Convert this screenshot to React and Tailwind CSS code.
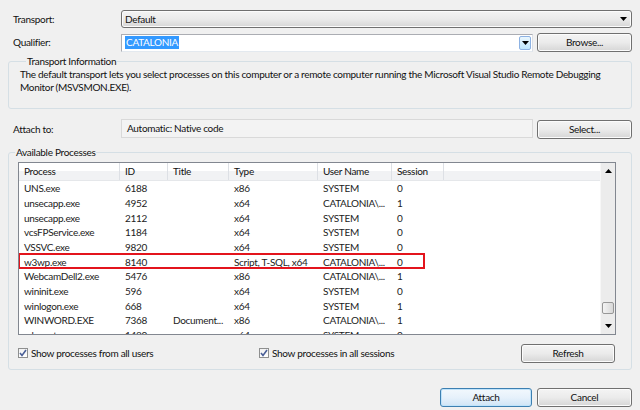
const processes = [
  { name: "UNS.exe", id: "6188", title: "", type: "x86", user: "SYSTEM", session: "0" },
  { name: "unsecapp.exe", id: "4952", title: "", type: "x64", user: "CATALONIA\\...", session: "1" },
  { name: "unsecapp.exe", id: "2112", title: "", type: "x64", user: "SYSTEM", session: "0" },
  { name: "vcsFPService.exe", id: "1184", title: "", type: "x64", user: "SYSTEM", session: "0" },
  { name: "VSSVC.exe", id: "9820", title: "", type: "x64", user: "SYSTEM", session: "0" },
  { name: "w3wp.exe", id: "8140", title: "", type: "Script, T-SQL, x64", user: "CATALONIA\\...", session: "0", marked: true },
  { name: "WebcamDell2.exe", id: "5476", title: "", type: "x86", user: "CATALONIA\\...", session: "1" },
  { name: "wininit.exe", id: "596", title: "", type: "x64", user: "SYSTEM", session: "0" },
  { name: "winlogon.exe", id: "668", title: "", type: "x64", user: "SYSTEM", session: "1" },
  { name: "WINWORD.EXE", id: "7368", title: "Document...", type: "x86", user: "CATALONIA\\...", session: "1" },
  { name: "wlanext.exe", id: "1480", title: "", type: "x64", user: "SYSTEM", session: "0" },
];

// win7 style button face
const face =
  "flex items-center rounded-[3px] border border-[#707070] bg-linear-to-b from-[#f4f4f4] via-[#ebebeb] to-[#d6d6d6] shadow-[inset_0_0_0_1px_#fcfcfc]";
const btn = `${face} h-[19px] justify-center`;

function Arrow({ up }) {
  return (
    <svg width="7" height="4" viewBox="0 0 7 4">
      <path d={up ? "M0 4 L3.5 0 L7 4 Z" : "M0 0 L7 0 L3.5 4 Z"} fill="#000" />
    </svg>
  );
}

function Check({ label }) {
  return (
    <div className="flex items-center gap-[3px]">
      <span className="w-[10px] h-[10px] border border-[#8e8f8f] bg-linear-to-b from-[#f2f2f2] to-[#ffffff] flex items-center justify-center">
        <svg width="8" height="8" viewBox="0 0 8 8">
          <path d="M1 4 L3 6.5 L7 1" stroke="#4a5f97" strokeWidth="1.6" fill="none" />
        </svg>
      </span>
      <span>{label}</span>
    </div>
  );
}

const cols = [
  { key: "name", label: "Process", w: "w-[101px]" },
  { key: "id", label: "ID", w: "w-[48px]" },
  { key: "title", label: "Title", w: "w-[61px]" },
  { key: "type", label: "Type", w: "w-[89px]" },
  { key: "user", label: "User Name", w: "w-[74px]" },
  { key: "session", label: "Session", w: "w-[52px]" },
];

export default function App() {
  return (
    <div className="w-[640px] h-[410px] overflow-hidden bg-[#f0f0f0] px-[8px] flex flex-col text-[10px] tracking-[-0.3px] text-[#111] [font-family:Lato,sans-serif]">
      {/* transport */}
      <div className="mt-[10px] h-[18px] flex items-center">
        <span className="w-[113px] pl-[5px]">Transport:</span>
        <div className={`${face} flex-1 h-[18px] justify-between pl-[3px] pr-[4px]`}>
          <span>Default</span>
          <Arrow />
        </div>
      </div>

      {/* qualifier */}
      <div className="mt-[5px] h-[19px] flex items-center">
        <span className="w-[113px] pl-[5px]">Qualifier:</span>
        <div className="w-[412px] h-[18px] bg-white border border-[#abadb3] border-b-[#e3e9ef] border-r-[#dbdfe6] flex items-center justify-between pl-[3px] pr-px">
          <span className="bg-[#3399ff] text-white leading-[13px] px-px">CATALONIA</span>
          <span className="w-[12px] h-[14px] rounded-[2px] border border-[#8db2e3] bg-linear-to-b from-[#eaf6fd] to-[#bee6fd] flex items-center justify-center">
            <Arrow />
          </span>
        </div>
        <div className={`${btn} w-[95px] ml-[4px]`}>Browse...</div>
      </div>

      {/* transport information */}
      <fieldset className="mt-[3px] border border-[#d5dfe5] rounded-[3px] pl-[11px] pb-[14px]">
        <legend className="ml-[6px] px-[1px] leading-[12px]">Transport Information</legend>
        <p className="leading-[13px] mt-px">
          The default transport lets you select processes on this computer or a remote computer running the Microsoft Visual Studio Remote Debugging
          <br />
          Monitor (MSVSMON.EXE).
        </p>
      </fieldset>

      {/* attach to */}
      <div className="mt-[10px] h-[20px] flex items-center">
        <span className="w-[113px] pl-[5px]">Attach to:</span>
        <div className="w-[412px] h-[19px] self-start bg-[#f3f3f3] border border-[#d9d9d9] flex items-center pl-[5px]">
          Automatic: Native code
        </div>
        <div className={`${btn} w-[95px] ml-[4px] self-end`}>Select...</div>
      </div>

      {/* available processes */}
      <fieldset className="mt-[7px] border border-[#d5dfe5] rounded-[3px] pb-[7px]">
        <legend className="ml-[6px] px-[1px] leading-[12px]">Available Processes</legend>

        <div className="mt-[4px] ml-[9px] mr-[15px] h-[173px] border border-[#828790] bg-white flex">
          <div className="flex-1 overflow-hidden">
            <div className="h-[18px] flex bg-[linear-gradient(#ffffff_0%,#ffffff_45%,#f1f2f4_45%,#f1f2f4_100%)] border-b border-[#e5e7ea]">
              {cols.map((c) => (
                <div key={c.key} className={`${c.w} shrink-0 pl-[5px] border-r border-[#dde0e5] flex items-center`}>
                  {c.label}
                </div>
              ))}
              <div className="flex-1" />
            </div>
            {processes.map((p, i) => (
              <div key={i} className="relative h-[14.67px] flex items-center leading-[14px] text-[#222]">
                {cols.map((c) => (
                  <div key={c.key} className={`${c.w} shrink-0 pl-[5px] whitespace-nowrap`}>
                    {p[c.key]}
                  </div>
                ))}
                {p.marked && (
                  <span className="absolute -left-px -top-px w-[407px] h-[16px] border-2 border-[#e3141c]" />
                )}
              </div>
            ))}
          </div>

          {/* scrollbar */}
          <div className="w-[15px] bg-[#ececec] border-l border-[#f7f7f7] flex flex-col">
            <div className="h-[16px] flex items-center justify-center">
              <Arrow up />
            </div>
            <div className="flex-1 flex flex-col justify-end items-center pb-[4px]">
              <div className="w-[12px] h-[12px] rounded-[2px] border border-[#979797] bg-linear-to-r from-[#f3f3f3] to-[#d8d8d8]" />
            </div>
            <div className="h-[16px] flex items-center justify-center">
              <Arrow />
            </div>
          </div>
        </div>

        <div className="mt-[9px] h-[18px] flex items-center">
          <div className="w-[241px] ml-[9px] shrink-0">
            <Check label="Show processes from all users" />
          </div>
          <Check label="Show processes in all sessions" />
          <div className={`${btn} w-[94px] ml-auto mr-[16px]`}>Refresh</div>
        </div>
      </fieldset>

      {/* dialog buttons */}
      <div className="mt-[18px] flex justify-end gap-[5px]">
        <div className="h-[19px] w-[92px] flex items-center justify-center rounded-[3px] border border-[#3c7fb1] bg-linear-to-b from-[#f2f8fd] via-[#e6f1fb] to-[#cfe4f6] shadow-[inset_0_0_0_1px_#bfe3fb]">
          Attach
        </div>
        <div className={`${btn} w-[95px]`}>Cancel</div>
      </div>
    </div>
  );
}
